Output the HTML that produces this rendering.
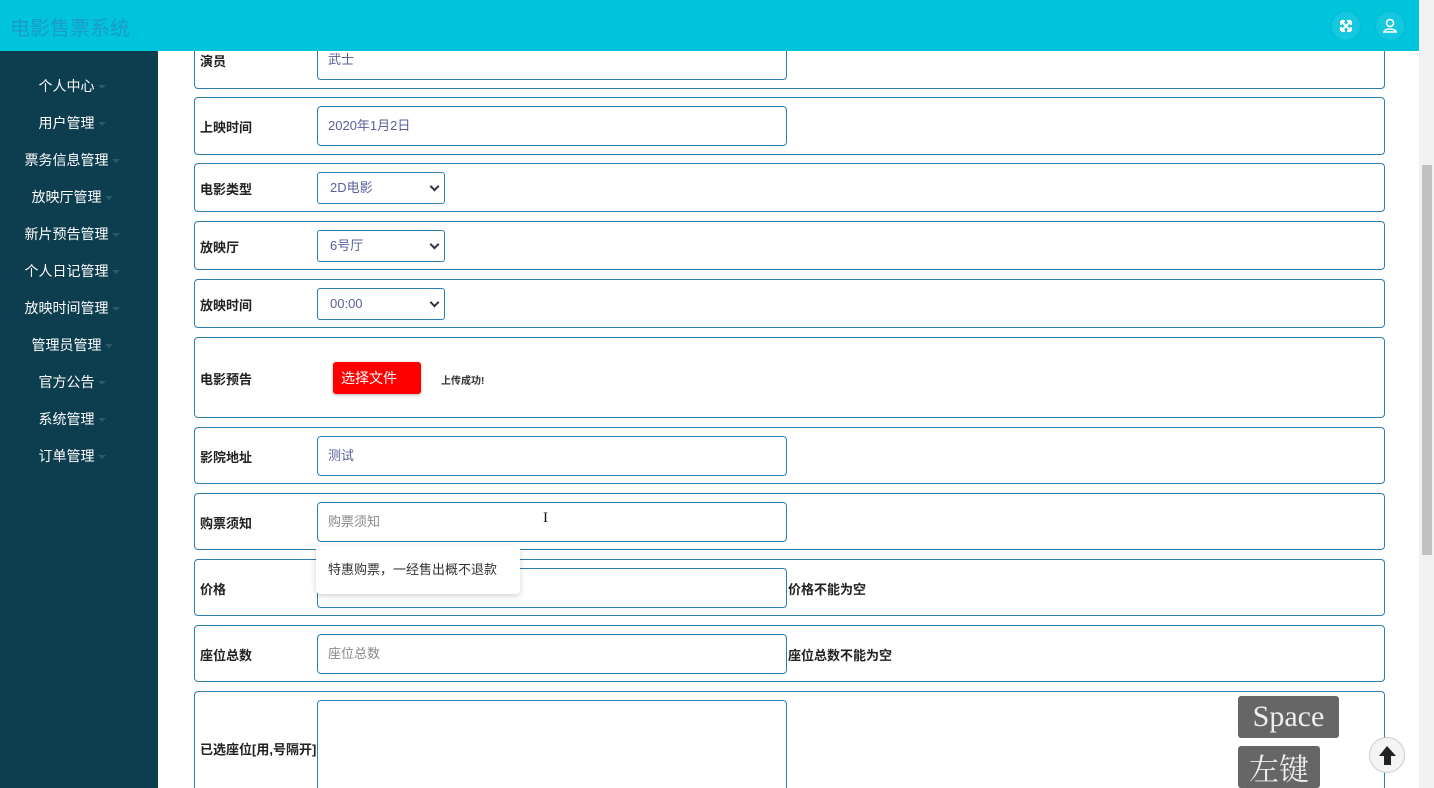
<!DOCTYPE html>
<html><head><meta charset="utf-8"><style>
*{box-sizing:border-box;margin:0;padding:0}
html,body{width:1434px;height:788px;overflow:hidden}
body{position:relative;background:#fff;font-family:"Liberation Sans","Noto Sans CJK SC",sans-serif;font-size:13px;color:#333}
.hd{position:absolute;left:0;top:0;width:1419px;height:51px;background:#00c4dc;z-index:10}
.logo{position:absolute;left:10px;top:12px;font-size:20px;color:#1a9bc9}
.ic{position:absolute;top:12px;width:28px;height:28px;border-radius:50%;background:#14c9df;box-shadow:0 0 3px rgba(0,0,0,.08)}
.sb{position:absolute;left:0;top:51px;width:158px;height:737px;background:#0d3e4f}
.mi{position:absolute;left:-7px;width:158px;text-align:center;color:#fff;font-size:14px}
.mi:after{content:"";display:inline-block;margin-left:3px;border-left:4px solid transparent;border-right:4px solid transparent;border-top:4px solid #2a5a6a;vertical-align:middle}
.row{position:absolute;left:194px;width:1191px;border:1px solid #2a7fb5;border-radius:4px}
.lb{position:absolute;left:200px;font-weight:bold;font-size:13px;color:#222}
.in{position:absolute;left:317px;width:470px;height:40px;border:1px solid #2a7fb5;border-radius:4px;padding-left:10px;line-height:38px;color:#5a5f9a;font-size:13px;background:#fff}
.ph{color:#888}
.sel{position:absolute;left:317px;width:128px;height:32px;border:1px solid #2a7fb5;border-radius:3px;padding-left:12px;line-height:30px;color:#5a5f9a}
.sel:after{content:"";position:absolute;right:6px;top:10px;width:5px;height:5px;border-right:2px solid #334;border-bottom:2px solid #334;transform:rotate(45deg)}
.err{position:absolute;left:788px;font-weight:bold;color:#222}
.sc{position:absolute;left:1419px;top:0;width:15px;height:788px;background:#f1f1f1;z-index:11}
</style></head><body>
<div class="hd"><div class="logo">电影售票系统</div>
<div class="ic" style="left:1332px"><svg width="28" height="28" viewBox="0 0 28 28" fill="none" stroke="#fff" stroke-width="2"><path d="M9 9l10 10M19 9L9 19M9 9h4M9 9v4M19 9h-4M19 9v4M9 19h4M9 19v-4M19 19h-4M19 19v-4"/></svg></div>
<div class="ic" style="left:1376px"><svg width="28" height="28" viewBox="0 0 28 28" fill="none" stroke="#fff" stroke-width="1.6"><circle cx="14" cy="11" r="3.5"/><path d="M8 20c1-4 11-4 12 0z"/></svg></div>
</div>
<div class="sb"></div>
<div class="mi" style="top:76px">个人中心</div>
<div class="mi" style="top:113px">用户管理</div>
<div class="mi" style="top:150px">票务信息管理</div>
<div class="mi" style="top:187px">放映厅管理</div>
<div class="mi" style="top:224px">新片预告管理</div>
<div class="mi" style="top:261px">个人日记管理</div>
<div class="mi" style="top:298px">放映时间管理</div>
<div class="mi" style="top:335px">管理员管理</div>
<div class="mi" style="top:372px">官方公告</div>
<div class="mi" style="top:409px">系统管理</div>
<div class="mi" style="top:446px">订单管理</div>

<div class="row" style="top:20px;height:69px"></div>
<div class="lb" style="top:51px">演员</div><div class="in" style="top:40px">武士</div>

<div class="row" style="top:97px;height:58px"></div>
<div class="lb" style="top:117px">上映时间</div><div class="in" style="top:106px">2020年1月2日</div>

<div class="row" style="top:163px;height:49px"></div>
<div class="lb" style="top:179px">电影类型</div><div class="sel" style="top:172px">2D电影</div>

<div class="row" style="top:221px;height:49px"></div>
<div class="lb" style="top:237px">放映厅</div><div class="sel" style="top:230px">6号厅</div>

<div class="row" style="top:279px;height:49px"></div>
<div class="lb" style="top:295px">放映时间</div><div class="sel" style="top:288px">00:00</div>

<div class="row" style="top:337px;height:81px"></div>
<div class="lb" style="top:369px">电影预告</div>
<div style="position:absolute;left:333px;top:362px;width:88px;height:32px;background:#f00;border-radius:3px;color:#fff;font-size:14px;line-height:32px;padding-left:8px;box-shadow:0 1px 3px rgba(0,0,0,.3)">选择文件</div>
<div style="position:absolute;left:441px;top:372px;font-size:10px;font-weight:bold;color:#333">上传成功!</div>

<div class="row" style="top:427px;height:57px"></div>
<div class="lb" style="top:447px">影院地址</div><div class="in" style="top:436px">测试</div>

<div class="row" style="top:493px;height:57px"></div>
<div class="lb" style="top:513px">购票须知</div><div class="in ph" style="top:502px">购票须知</div>
<div style="position:absolute;left:543px;top:510px;font-size:15px;color:#111;font-family:'Liberation Serif',serif">I</div>

<div class="row" style="top:559px;height:57px"></div>
<div class="lb" style="top:579px">价格</div><div class="in" style="top:568px"></div><div class="err" style="top:579px">价格不能为空</div>

<div class="row" style="top:625px;height:57px"></div>
<div class="lb" style="top:645px">座位总数</div><div class="in ph" style="top:634px">座位总数</div><div class="err" style="top:645px">座位总数不能为空</div>

<div class="row" style="top:691px;height:110px"></div>
<div class="lb" style="top:739px">已选座位[用,号隔开]</div><div class="in" style="top:700px;height:100px"></div>

<div style="position:absolute;left:316px;top:546px;width:204px;height:48px;background:#fff;border-radius:4px;box-shadow:0 2px 6px rgba(0,0,0,.18);padding:13px 0 0 12px;font-size:13px;color:#333">特惠购票，一经售出概不退款</div>

<div style="position:absolute;left:1238px;top:696px;width:101px;height:42px;background:#666;border-radius:3px;color:#eee;font-family:'Liberation Serif',serif;font-size:30px;line-height:42px;text-align:center">Space</div>
<div style="position:absolute;left:1238px;top:746px;width:82px;height:42px;background:#666;border-radius:3px;color:#eee;font-family:'Noto Serif CJK SC',serif;font-size:30px;line-height:42px;text-align:center">左键</div>
<div style="position:absolute;left:1369px;top:737px;width:36px;height:36px;border-radius:50%;background:#f4f4f4;border:1px solid #ccc"><svg width="36" height="36" viewBox="0 0 36 36"><path d="M17 8l-8 10h5v9h7v-9h5z" fill="#222"/></svg></div>

<div class="sc"><div style="position:absolute;left:3px;top:165px;width:10px;height:390px;background:#c1c1c1"></div></div>
</body></html>
